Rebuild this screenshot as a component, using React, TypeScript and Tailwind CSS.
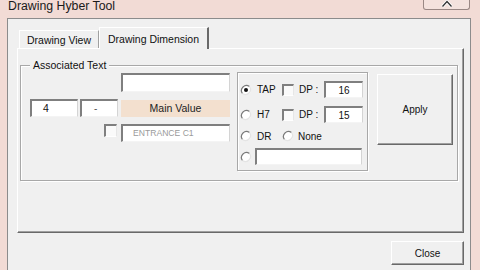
const sunken =
  "bg-white border-t-2 border-l-2 border-r border-b border-t-[#7f7f7f] border-l-[#7f7f7f] border-r-[#d4d4d4] border-b-[#f4f4f4]";

const raised =
  "bg-[#f0f0f0] border-t border-l border-r border-b border-t-white border-l-white border-r-[#696969] border-b-[#696969] shadow-[inset_-1px_-1px_0_#a0a0a0]";

const etched =
  "border border-[#a8a8a8] shadow-[inset_1px_1px_0_#ffffff,1px_1px_0_#ffffff]";

function Radio({ checked = false }: { checked?: boolean }) {
  return (
    <svg width="12" height="12" viewBox="0 0 12 12" className="shrink-0">
      <circle cx="6" cy="6" r="5" fill="#ffffff" />
      <path d="M9.5 2.5 A5 5 0 0 0 2.5 9.5" fill="none" stroke="#7a7a7a" strokeWidth="1.2" />
      <path d="M2.5 9.5 A5 5 0 0 0 9.5 2.5" fill="none" stroke="#e4e4e4" strokeWidth="1.2" />
      {checked && <circle cx="6" cy="6" r="2" fill="#111111" />}
    </svg>
  );
}

function Check() {
  return (
    <div className="w-[12px] h-[12px] shrink-0 bg-[#fafafa] border-t-2 border-l-2 border-r border-b border-t-[#7f7f7f] border-l-[#7f7f7f] border-r-[#e6e6e6] border-b-[#ffffff]" />
  );
}

function DpRow({ label, checked, value }: { label: string; checked?: boolean; value: string }) {
  return (
    <div className="flex items-center h-[17px]">
      <div className="w-[42px] flex items-center gap-[5px]">
        <Radio checked={checked} />
        <span>{label}</span>
      </div>
      <Check />
      <span className="ml-[5px] w-[25px]">DP :</span>
      <div className={`${sunken} w-[39px] h-[17px] flex items-center justify-center pt-[1px]`}>{value}</div>
    </div>
  );
}

export default function App() {
  return (
    <div className="w-[480px] h-[270px] overflow-hidden bg-[#f2dbd5] font-['Liberation_Sans',Arial,sans-serif] text-[#111]">
      <div className="h-[18px] flex items-start">
        <span className="pl-[8px] text-[12.3px] leading-none text-[#1a1a1a]">Drawing Hyber Tool</span>
        <div className="ml-auto mr-[10px] w-[47px] h-[10px] border-l border-r border-b border-[#9a8884] rounded-b-[3px] bg-[#f4e2dd] flex justify-center overflow-hidden">
          <svg width="14" height="9" viewBox="0 0 14 9">
            <path d="M2.5 6.5 L7 1.5 L11.5 6.5" fill="none" stroke="#ffffff" strokeWidth="3" />
            <path d="M2.5 6.5 L7 1.5 L11.5 6.5" fill="none" stroke="#333333" strokeWidth="1.3" />
          </svg>
        </div>
      </div>

      <div className="ml-[7px] w-[464px] h-[252px] bg-[#f0f0f0] border-l border-t border-r border-[#8c8c8c] flex flex-col">
        <div className="ml-[9px] mt-[8px] h-[21px] flex items-end text-[10.5px]">
          <div className="ml-[2px] w-[80px] h-[18px] border-t border-l border-t-white border-l-white border-r border-r-[#a0a0a0] flex items-center pl-[7px] pt-[2px] bg-[#f0f0f0]">
            Drawing View
          </div>
          <div className="relative z-10 -mb-px w-[110px] h-[22px] bg-[#f0f0f0] border-t border-l border-t-white border-l-white border-r-2 border-r-[#696969] flex items-start pl-[8px] pt-[4px]">
            Drawing Dimension
          </div>
        </div>

        <div className="ml-[9px] w-[447px] h-[185px] bg-[#f0f0f0] border-t border-l border-t-white border-l-white border-r border-b border-r-[#696969] border-b-[#696969] shadow-[inset_-1px_-1px_0_#a0a0a0]">
          <div className={`relative ml-[2px] mt-[16px] w-[438px] h-[116px] ${etched}`}>
            <span className="absolute left-[9px] -top-[7px] px-[3px] bg-[#f0f0f0] text-[10.5px] leading-[12px]">
              Associated Text
            </span>
            <div className="flex items-start pl-[9px] text-[10px]">
              <div className="mt-[33px] w-[88px] flex flex-col">
                <div className="flex gap-[2px]">
                  <div className={`${sunken} w-[48px] h-[18px] flex items-center pl-[11px] text-[10.5px]`}>4</div>
                  <div className={`${sunken} w-[38px] h-[18px] flex items-center pl-[12px] text-[#555]`}>-</div>
                </div>
                <div className="self-end mr-[1px] mt-[7px] w-[13px] h-[13px] bg-[#fafafa] border-t-2 border-l-2 border-r border-b border-t-[#7f7f7f] border-l-[#7f7f7f] border-r-[#e6e6e6] border-b-white" />
              </div>

              <div className="ml-[3px] mt-[7px] w-[109px] flex flex-col">
                <div className={`${sunken} h-[19px]`} />
                <div className="mt-[8px] h-[17px] bg-[#f3e0cf] flex items-center justify-center text-[10.5px] text-[#222]">
                  Main Value
                </div>
                <div className={`${sunken} mt-[7px] h-[18px] flex items-center pl-[10px] text-[8.6px] text-[#9a9a9a]`}>
                  ENTRANCE C1
                </div>
              </div>

              <div className={`ml-[7px] mt-[6px] w-[131px] h-[99px] ${etched} pl-[2px] pt-[8px] flex flex-col`}>
                <DpRow label="TAP" checked value="16" />
                <div className="mt-[8px]">
                  <DpRow label="H7" value="15" />
                </div>
                <div className="mt-[4px] h-[18px] flex items-center">
                  <div className="w-[42px] flex items-center gap-[5px]">
                    <Radio />
                    <span>DR</span>
                  </div>
                  <Radio />
                  <span className="ml-[4px]">None</span>
                </div>
                <div className="mt-[3px] h-[17px] flex items-center">
                  <Radio />
                  <div className={`${sunken} ml-[3px] w-[107px] h-[17px]`} />
                </div>
              </div>

              <div className={`ml-[9px] mt-[8px] w-[76px] h-[71px] ${raised} flex items-center justify-center`}>
                Apply
              </div>
            </div>
          </div>
        </div>

        <div className={`self-end mr-[6px] mt-[8px] w-[73px] h-[24px] ${raised} flex items-center justify-center text-[10px]`}>
          Close
        </div>
      </div>
    </div>
  );
}
